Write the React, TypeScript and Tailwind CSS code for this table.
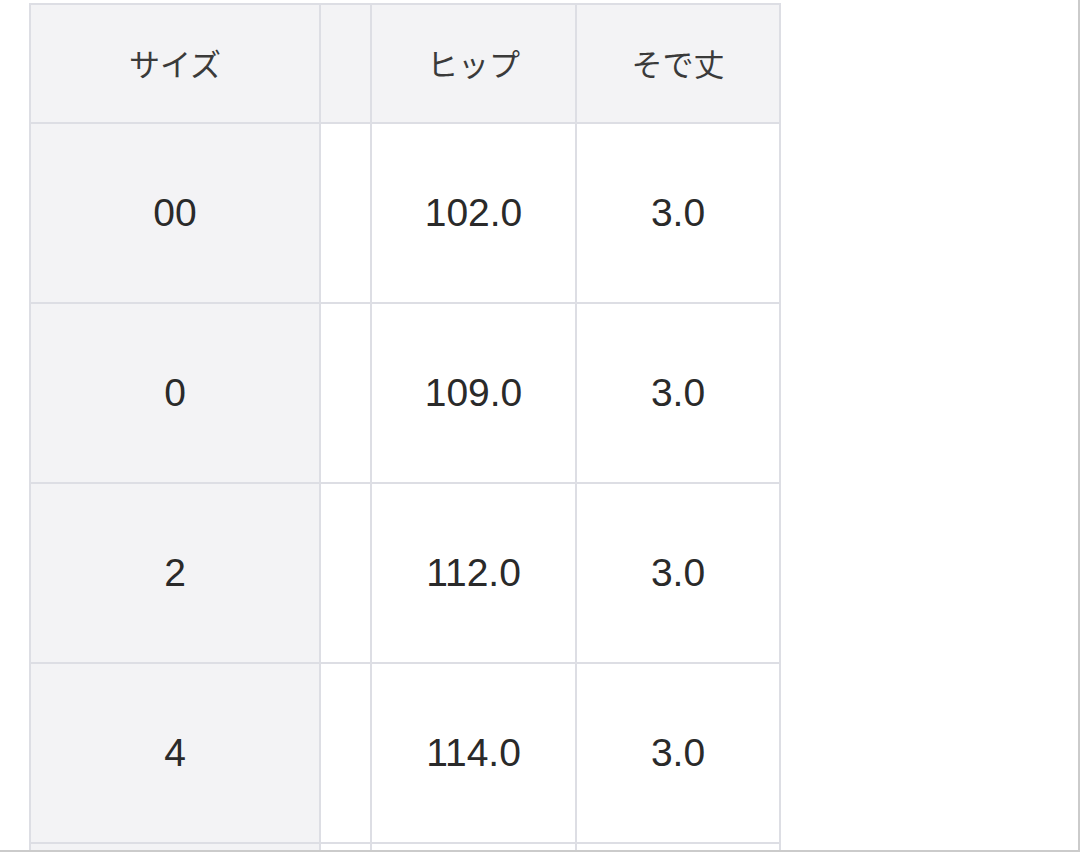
const headers = ["サイズ", "", "ヒップ", "そで丈"];

const rows = [
  ["00", "102.0", "3.0"],
  ["0", "109.0", "3.0"],
  ["2", "112.0", "3.0"],
  ["4", "114.0", "3.0"],
  ["", "", ""],
];

export default function App() {
  return (
    <div className="h-[852px] w-[1080px] overflow-hidden border-b-2 border-r-2 border-[#cbcbcb] bg-white">
      <div className="ml-[29px] mt-[3px] grid w-[752px] grid-cols-[290px_51px_205px_204px] border-l-2 border-t-2 border-[#dddee4] text-[#2a2a2a]">
        {headers.map((h, i) => (
          <div
            key={i}
            className="flex h-[119px] items-center justify-center border-b-2 border-r-2 border-[#dddee4] bg-[#f3f3f5] text-[31px] text-[#3a3a3a] [font-family:'Noto_Sans_CJK_JP',sans-serif]"
          >
            {h}
          </div>
        ))}
        {rows.map((r, i) => (
          <div key={i} className="contents">
            <div className="flex h-[180px] items-center justify-center border-b-2 border-r-2 border-[#dddee4] bg-[#f3f3f5] text-[39px] [font-family:'Liberation_Sans',sans-serif]">
              {r[0]}
            </div>
            <div className="h-[180px] border-b-2 border-r-2 border-[#dddee4] bg-white" />
            <div className="flex h-[180px] items-center justify-center border-b-2 border-r-2 border-[#dddee4] bg-white text-[39px] [font-family:'Liberation_Sans',sans-serif]">
              {r[1]}
            </div>
            <div className="flex h-[180px] items-center justify-center border-b-2 border-r-2 border-[#dddee4] bg-white text-[39px] [font-family:'Liberation_Sans',sans-serif]">
              {r[2]}
            </div>
          </div>
        ))}
      </div>
    </div>
  );
}
